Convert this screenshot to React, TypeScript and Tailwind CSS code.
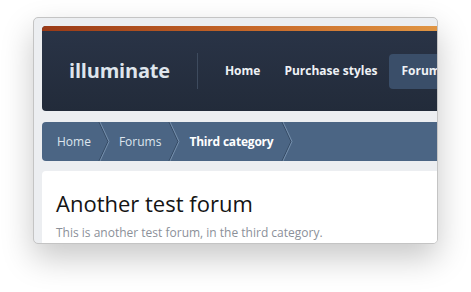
import React from 'react';

const font = { fontFamily: '"Open Sans", "Noto Sans", sans-serif' };

const Chevron: React.FC = () => (
  <svg width="13" height="39" viewBox="0 0 13 39" className="shrink-0">
    <polyline points="1,0 10,19.5 1,39" fill="none" stroke="#354a63" strokeWidth="1" />
    <polyline points="2,0 11,19.5 2,39" fill="none" stroke="#7690ad" strokeWidth="1" />
  </svg>
);

const crumbs = [
  { label: 'Home', bold: false },
  { label: 'Forums', bold: false },
  { label: 'Third category', bold: true },
];

export default function App() {
  return (
    <div className="w-[471px] h-[292px] bg-white pt-[17px] pl-[33px]" style={font}>
      <div className="w-[405px] h-[227px] rounded-[5px] border border-[#c4c4c4] bg-[#eceef1] overflow-hidden shadow-[0_14px_32px_rgba(0,0,0,0.22)] pt-[8px] pl-[8px]">
        <div className="w-[440px] flex flex-col">
          {/* header */}
          <div className="h-[85px] rounded-[4px] overflow-hidden bg-gradient-to-b from-[#2a3447] to-[#222b3a] flex flex-col">
            <div className="h-[5px] bg-gradient-to-r from-[#9a3a17] via-[#c86a2a] to-[#e6a04a]" />
            <div className="flex-1 flex items-center whitespace-nowrap">
              <div className="shrink-0 pl-[27px] pr-[27px] text-[20px] font-bold text-[#dfe5ec] tracking-[-0.2px] leading-none">illuminate</div>
              <div className="shrink-0 w-px h-[36px] bg-[#3e4b5e]" />
              <nav className="shrink-0 flex items-center pl-[15px]">
                <div className="px-3 h-[35px] flex items-center text-[12px] font-bold text-[#eef1f5]">Home</div>
                <div className="px-3 h-[35px] flex items-center text-[12px] font-bold text-[#eef1f5]">Purchase styles</div>
                <div className="px-3 h-[35px] flex items-center text-[12px] font-bold text-[#eef1f5] bg-[#3a4e69] rounded-[4px] w-[80px]">Forums</div>
              </nav>
            </div>
          </div>
          {/* breadcrumb */}
          <div className="mt-[11px] h-[39px] rounded-[4px] bg-[#4b6584] flex items-center pl-[15px] whitespace-nowrap">
            {crumbs.map((c) => (
              <React.Fragment key={c.label}>
                <span className={`text-[12px] ${c.bold ? 'font-bold text-white tracking-[-0.2px]' : 'text-[#dde5ee]'} pr-[7px]`}>{c.label}</span>
                <Chevron />
                <span className="w-[8px]" />
              </React.Fragment>
            ))}
          </div>
          {/* content */}
          <div className="mt-[10px] bg-white rounded-t-[4px] px-[14px] pt-[17px] h-[90px]">
            <h1 className="text-[22px] text-[#141414] leading-[30px]">Another test forum</h1>
            <p className="mt-[6px] text-[12px] text-[#8b9099] leading-[18px]">This is another test forum, in the third category.</p>
          </div>
        </div>
      </div>
    </div>
  );
}
